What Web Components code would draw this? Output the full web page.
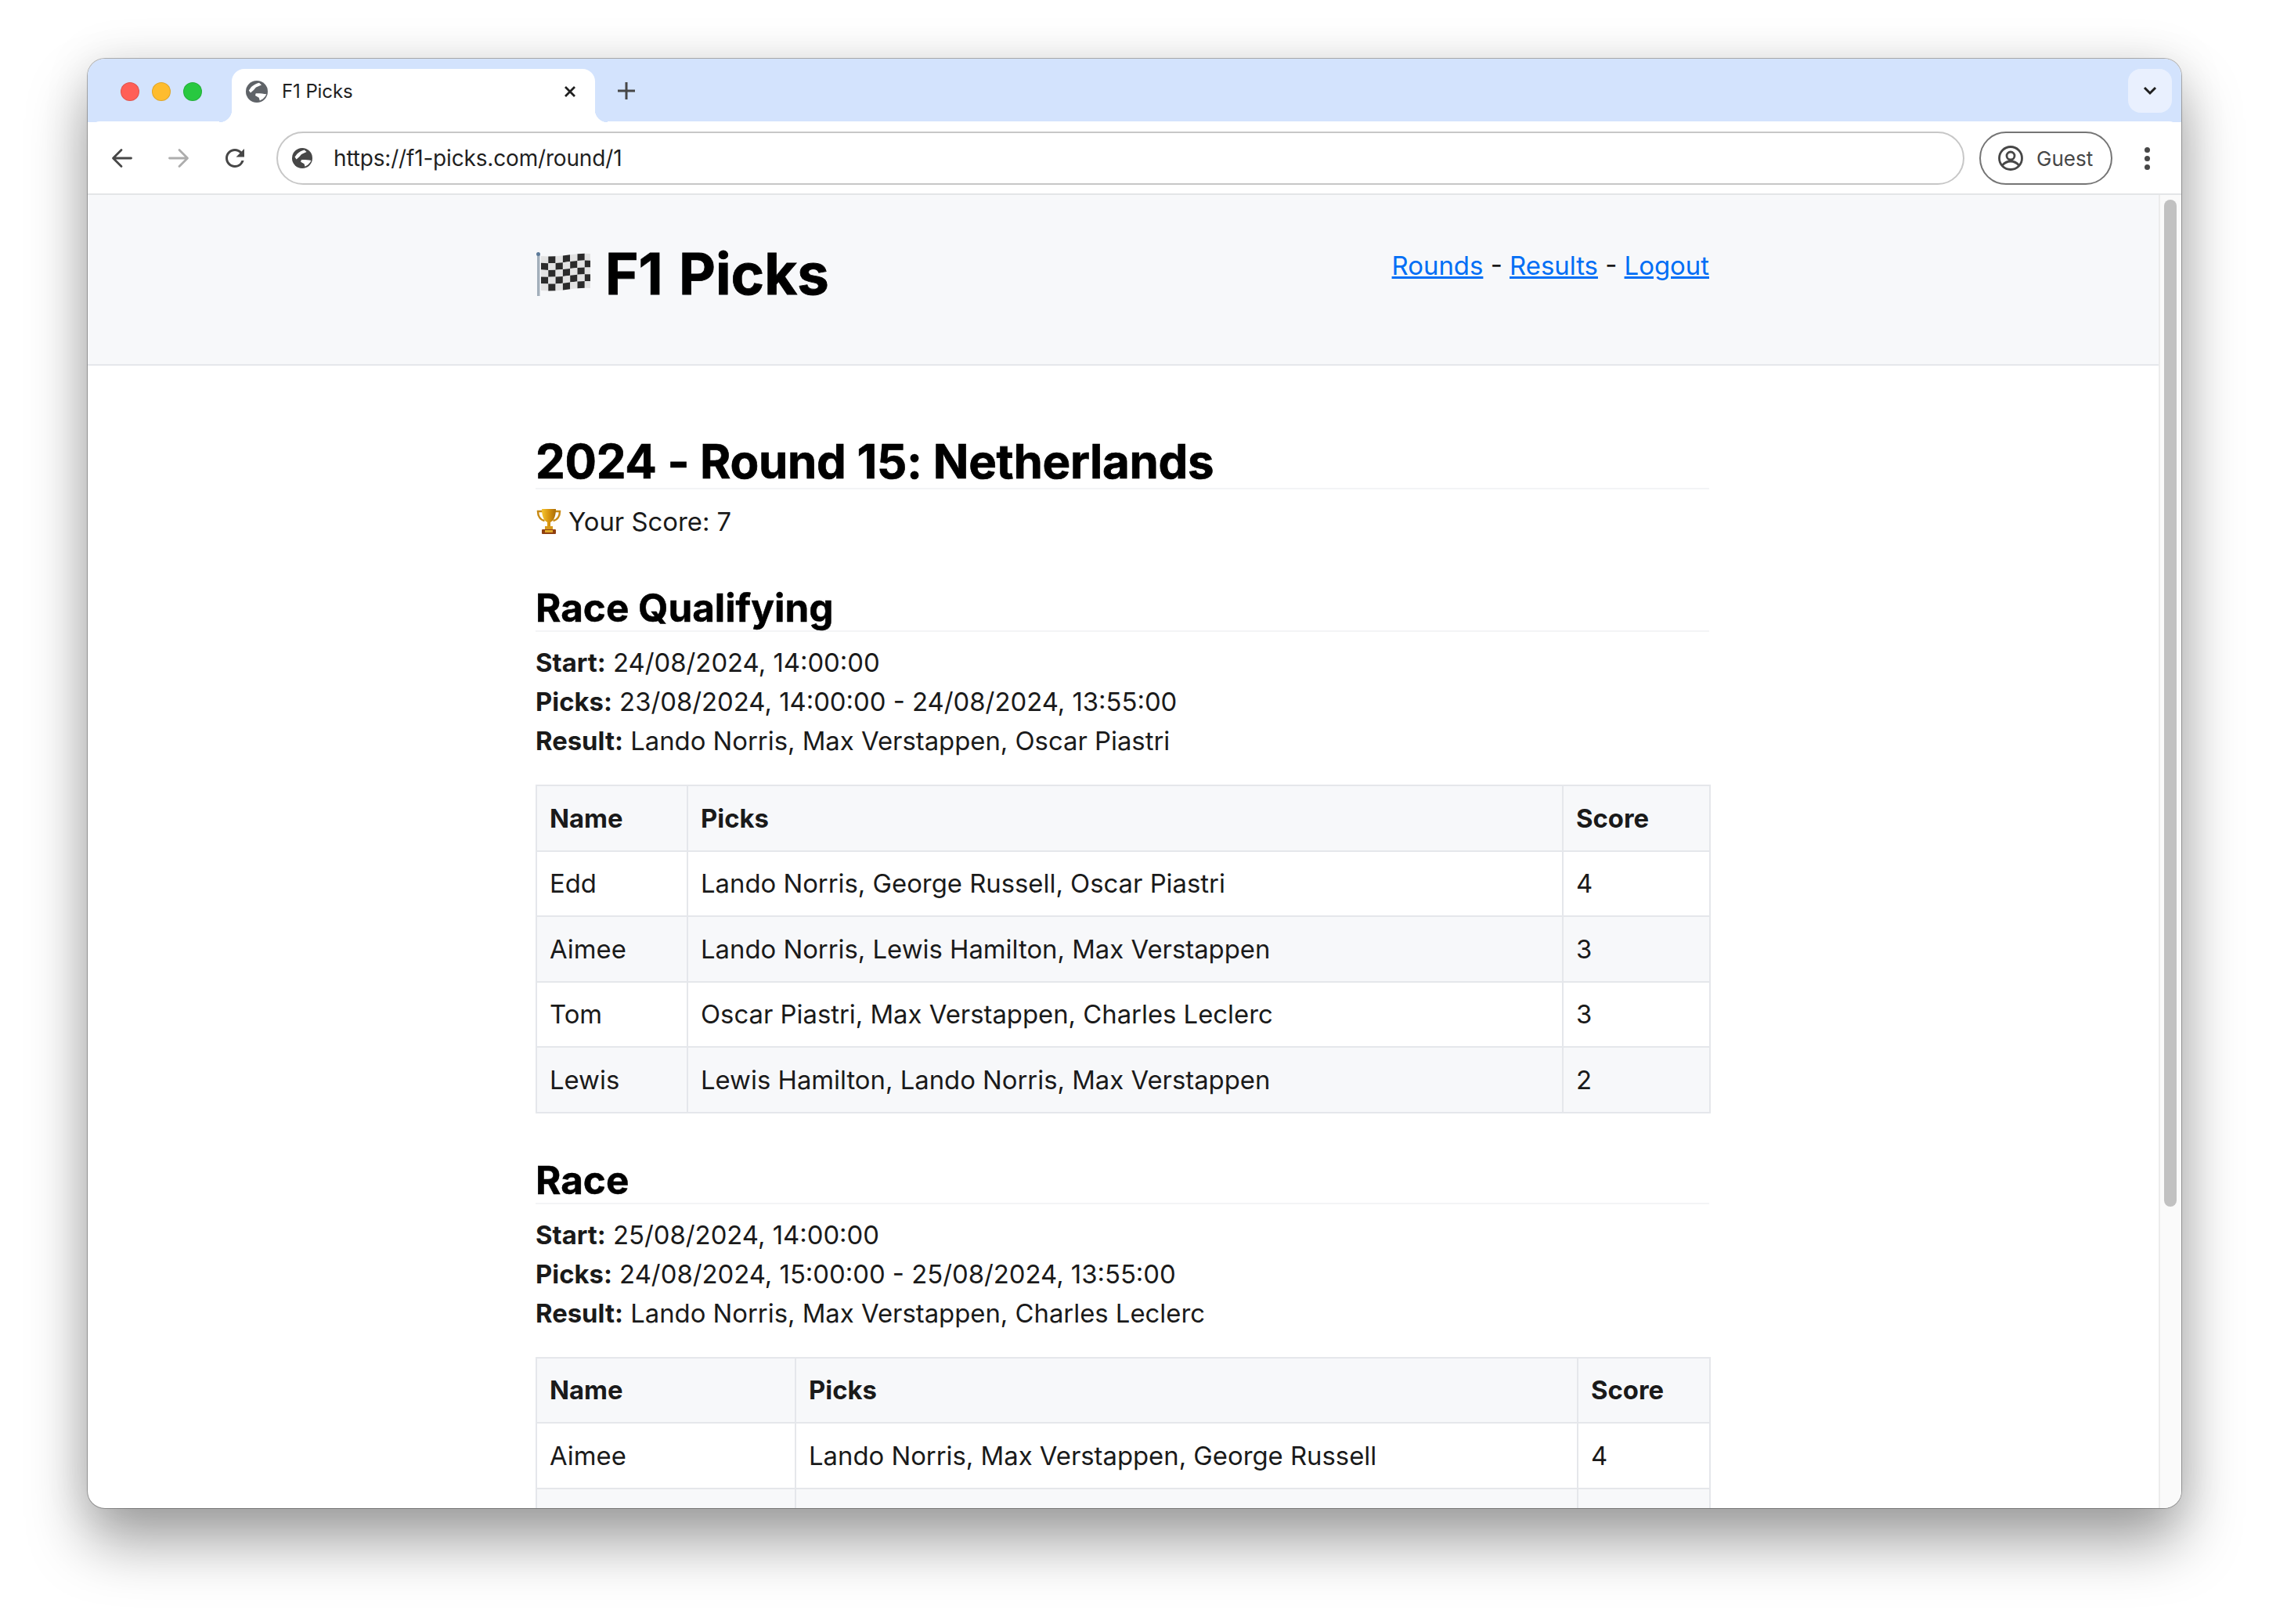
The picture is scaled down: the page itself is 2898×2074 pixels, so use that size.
<!DOCTYPE html>
<html>
<head>
<title>F1 Picks</title>
<style>
    html, body { margin: 0; padding: 0; background: #fff; }
    body { width: 2898px; height: 2074px; overflow: hidden; font-family: Inter, "Liberation Sans", sans-serif; }
</style>
</head>
<body>
<browser-window>
    <site-header></site-header>
    <site-main>
        <round-title score="7">2024 - Round 15: Netherlands</round-title>
        <round-section name="Race Qualifying" start="24/08/2024, 14:00:00" picks="23/08/2024, 14:00:00 - 24/08/2024, 13:55:00" result="Lando Norris, Max Verstappen, Oscar Piastri">
            <picks-table cols="193,1118,188" rows="Edd|Lando Norris, George Russell, Oscar Piastri|4;Aimee|Lando Norris, Lewis Hamilton, Max Verstappen|3;Tom|Oscar Piastri, Max Verstappen, Charles Leclerc|3;Lewis|Lewis Hamilton, Lando Norris, Max Verstappen|2"></picks-table>
        </round-section>
        <round-section name="Race" start="25/08/2024, 14:00:00" picks="24/08/2024, 15:00:00 - 25/08/2024, 13:55:00" result="Lando Norris, Max Verstappen, Charles Leclerc">
            <!-- the row below Aimee is only just showing above the window's edge -->
            <picks-table cols="331,999,169" rows="Aimee|Lando Norris, Max Verstappen, George Russell|4;||"></picks-table>
        </round-section>
    </site-main>
</browser-window>
<script>
    const GLOBE = (size, fill) => `<svg width="${size}" height="${size}" viewBox="0 0 28 28"><circle cx="14" cy="14" r="14" fill="${fill}"/><path d="M17 2.800C13.500 3.600 10 5.500 7 8L3.800 12.500 6 15.500 10 12 13 8.500 20 5.500zM26.300 17.300C22 16.600 17 16 12.700 16.300L12 19l4.700 2.700 1.100 3.800 4-2.300 3-3.200z" fill="#fff"/></svg>`;

    // checkered flag, cell by cell so the wave runs through all of them
    const FLAG = () => {
        const wave = (x) => 13 - x * 0.04 + 1 * Math.sin(x / 11);
        const cells = [];
        const W = 9.300, H = 8.800;
        for (let c = 0; c < 7; c++) {
            for (let r = 0; r < 5; r++) {
                const x1 = 7 + c * W, x2 = x1 + W;
                const y = (x, k) => (wave(x - 7) - 8 + k * H).toFixed(1);
                const dark = (c + r) % 2 === 1;
                cells.push(`<polygon points="${x1.toFixed(1)},${y(x1, r)} ${x2.toFixed(1)},${y(x2, r)} ${x2.toFixed(1)},${y(x2, r + 1)} ${x1.toFixed(1)},${y(x1, r + 1)}" fill="${dark ? "#2b2b2b" : "#e2e2e2"}"/>`);
            }
        }
        return `<svg width="70" height="56" viewBox="0 0 70 56"><rect x="2" y="2" width="3.500" height="54" fill="#a3afbb"/><circle cx="3.500" cy="2.500" r="2.500" fill="#5c7a99"/>${cells.join("")}</svg>`;
    };

    customElements.define("browser-tab", class BrowserTab extends HTMLElement {
        constructor() {
            super();
            this.attachShadow({ mode: "open" }).innerHTML = `
                <style>
                    :host { display: flex; align-items: center; width: 464px; height: 68px; background: #fff; border-radius: 16px 16px 0 0; position: relative; box-sizing: border-box; padding: 0 0 11px 18px; font: 400 24px Inter, sans-serif; color: #1f1f1f; }
                    /* little concave corners at the foot of the tab */
                    :host::before, :host::after { content: ""; position: absolute; bottom: 0; width: 16px; height: 16px; background: radial-gradient(circle at 0 0, #d3e3fd 16px, #fff 16.5px); }
                    :host::before { left: -16px; }
                    :host::after { right: -16px; background: radial-gradient(circle at 100% 0, #d3e3fd 16px, #fff 16.5px); }
                    .title { margin-left: 18px; flex: 1; letter-spacing: -.1px; }
                    svg.x { margin-right: 23px; }
                </style>
                ${GLOBE(28, "#5f6368")}
                <span class="title">F1 Picks</span>
                <svg class="x" width="18" height="18" viewBox="0 0 18 18"><path d="M3 3l12 12M15 3L3 15" stroke="#1f1f1f" stroke-width="2.800"/></svg>`;
        }
    });

    customElements.define("tab-strip", class TabStrip extends HTMLElement {
        constructor() {
            super();
            this.attachShadow({ mode: "open" }).innerHTML = `
                <style>
                    :host { display: flex; align-items: flex-end; height: 81px; background: #d3e3fd; box-sizing: border-box; }
                    .lights { display: flex; gap: 16px; width: 184px; box-sizing: border-box; padding-left: 42px; align-self: flex-start; margin-top: 30px; }
                    .lights i { width: 24px; height: 24px; border-radius: 50%; box-sizing: border-box; border: 1px solid rgba(0,0,0,.12); }
                    .plus { align-self: flex-start; margin: 30px 0 0 29px; }
                    .more { margin-left: auto; margin-right: 12px; align-self: flex-start; margin-top: 13px; width: 56px; height: 56px; border-radius: 16px; background: #e9f0fe; display: flex; align-items: center; justify-content: center; }
                </style>
                <div class="lights"><i style="background:#ff5f57"></i><i style="background:#febc2e"></i><i style="background:#28c840"></i></div>
                <browser-tab></browser-tab>
                <svg class="plus" width="22" height="22" viewBox="0 0 22 22"><path d="M11 0v22M0 11h22" stroke="#474747" stroke-width="3"/></svg>
                <div class="more"><svg width="18" height="12" viewBox="0 0 18 12"><path d="M2 2l7 7 7-7" fill="none" stroke="#1f1f1f" stroke-width="3"/></svg></div>`;
        }
    });

    customElements.define("browser-toolbar", class BrowserToolbar extends HTMLElement {
        constructor() {
            super();
            this.attachShadow({ mode: "open" }).innerHTML = `
                <style>
                    :host { display: flex; align-items: center; height: 94px; background: #fff; border-radius: 16px 16px 0 0; margin-top: -1px; box-sizing: border-box; border-bottom: 2px solid #e3e5e7; padding: 2px 0 0 0; }
                    .nav { display: flex; align-items: center; gap: 36px; padding-left: 26px; width: 241px; box-sizing: border-box; }
                    .omni { flex: 0 0 2156px; height: 68px; box-sizing: border-box; border: 2px solid #c7c7c7; border-radius: 34px; display: flex; align-items: center; padding-left: 18px; font: 400 28px Inter, sans-serif; color: #1f1f1f; }
                    .omni span { margin-left: 27px; letter-spacing: -.17px; }
                    .guest { margin-left: 19px; width: 170px; height: 68px; box-sizing: border-box; border: 2px solid #757575; border-radius: 34px; display: flex; align-items: center; padding-left: 22px; gap: 17px; font: 400 26px Inter, sans-serif; color: #474747; }
                    .dots { margin-left: 41px; display: flex; flex-direction: column; gap: 4px; }
                    .dots i { width: 7px; height: 7px; background: #474747; border-radius: 50%; }
                </style>
                <div class="nav">
                    <svg width="36" height="36" viewBox="0 0 36 36"><path d="M29.500 18H7M17 7.500L6.500 18 17 28.500" fill="none" stroke="#474747" stroke-width="2.800" stroke-linecap="round" stroke-linejoin="round"/></svg>
                    <svg width="36" height="36" viewBox="0 0 36 36"><path d="M6.500 18H29M19 7.500L29.500 18 19 28.500" fill="none" stroke="#adadad" stroke-width="2.800" stroke-linecap="round" stroke-linejoin="round"/></svg>
                    <svg width="36" height="36" viewBox="0 0 24 24"><path fill="#474747" d="M17.650 6.350A7.958 7.958 0 0 0 12 4c-4.420 0-7.990 3.580-7.990 8s3.570 8 7.990 8c3.730 0 6.840-2.550 7.730-6h-2.080A5.990 5.990 0 0 1 12 18c-3.310 0-6-2.690-6-6s2.690-6 6-6c1.660 0 3.140.69 4.220 1.780L13 11h7V4l-2.350 2.350z"/></svg>
                </div>
                <div class="omni">${GLOBE(26, "#474747")}<span>https://f1-picks.com/round/1</span></div>
                <div class="guest">
                    <svg width="32" height="32" viewBox="0 0 32 32"><circle cx="16" cy="16" r="14.500" fill="none" stroke="#474747" stroke-width="2.800"/><circle cx="16" cy="13" r="5" fill="none" stroke="#474747" stroke-width="2.800"/><path d="M5.500 25c3-3.400 6.600-5 10.500-5s7.500 1.600 10.500 5" fill="none" stroke="#474747" stroke-width="2.800"/></svg>
                    <span>Guest</span>
                </div>
                <div class="dots"><i></i><i></i><i></i></div>`;
        }
    });

    customElements.define("browser-window", class BrowserWindow extends HTMLElement {
        constructor() {
            super();
            this.attachShadow({ mode: "open" }).innerHTML = `
                <style>
                    :host { display: flex; flex-direction: column; width: 2674px; height: 1851px; margin: 75px 0 0 112px; background: #fff; border-radius: 22px; overflow: hidden; box-shadow: 0 0 0 1px rgba(0,0,0,.28), 0 44px 76px rgba(0,0,0,.36), 0 0 60px rgba(0,0,0,.1); }
                    .body { flex: 1; display: flex; min-height: 0; }
                    .view { flex: 1; min-width: 0; overflow: hidden; }
                    .track { flex: 0 0 29px; box-sizing: border-box; background: #fafafa; border-left: 2px solid #ececec; padding: 6px 6px 0 5px; }
                    .thumb { height: 1286px; border-radius: 8px; background: #c1c1c1; }
                </style>
                <tab-strip></tab-strip>
                <browser-toolbar></browser-toolbar>
                <div class="body">
                    <div class="view"><slot></slot></div>
                    <div class="track"><div class="thumb"></div></div>
                </div>`;
        }
    });

    customElements.define("site-header", class SiteHeader extends HTMLElement {
        constructor() {
            super();
            this.attachShadow({ mode: "open" }).innerHTML = `
                <style>
                    :host { display: block; background: #f7f8fa; border-bottom: 2px solid #e5e7eb; height: 218px; box-sizing: border-box; }
                    .wrap { width: 1499px; margin-left: 572px; display: flex; justify-content: space-between; align-items: flex-start; padding-top: 65px; box-sizing: border-box; }
                    h1 { margin: 0; font: 700 72.500px/1 Inter, sans-serif; color: #000; display: flex; align-items: center; gap: 19px; word-spacing: 3px; -webkit-text-stroke: .8px #000; }
                    nav { font: 400 32.900px/1.5 Inter, sans-serif; color: #1a1a1a; padding-top: 1px; }
                    a { color: #006ef5; text-decoration: underline; }
                </style>
                <div class="wrap">
                    <h1>${FLAG()}<span>F1 Picks</span></h1>
                    <nav><a>Rounds</a> - <a>Results</a> - <a>Logout</a></nav>
                </div>`;
        }
    });

    customElements.define("site-main", class SiteMain extends HTMLElement {
        constructor() {
            super();
            this.attachShadow({ mode: "open" }).innerHTML = `
                <style>
                    :host { display: block; width: 1499px; margin-left: 572px; padding-top: 84px; }
                </style>
                <slot></slot>`;
        }
    });

    customElements.define("round-title", class RoundTitle extends HTMLElement {
        constructor() {
            super();
            this.attachShadow({ mode: "open" }).innerHTML = `
                <style>
                    :host { display: block; color: #1a1a1a; }
                    h2 { margin: 0; font: 700 60px/76px Inter, sans-serif; color: #000; border-bottom: 2px solid #f3f4f6; height: 72px; letter-spacing: -.3px; -webkit-text-stroke: .7px #000; }
                    p { margin: 0 0 34px; font: 400 32.850px/50px Inter, sans-serif; display: flex; align-items: center; gap: 9px; height: 81px; }
                    svg { margin-left: 1px; }
                </style>
                <h2><slot></slot></h2>
                <p>
                    <svg width="32" height="33" viewBox="0 0 32 33">
                        <defs><linearGradient id="gold" x1="0" x2="1" y1="0" y2="0"><stop offset="0" stop-color="#f4c430"/><stop offset=".5" stop-color="#d8950f"/><stop offset="1" stop-color="#a96d08"/></linearGradient></defs>
                        <path d="M8 4H2c0 6 3 11 8.500 12M24 4h6c0 6-3 11-8.500 12" fill="none" stroke="#c88a14" stroke-width="2.500"/>
                        <path d="M7 1h18c0 10-3 15-7 17v6h-4v-6C10 16 7 11 7 1z" fill="url(#gold)"/>
                        <rect x="11" y="23" width="10" height="4" fill="#d89a1c"/>
                        <rect x="7" y="27" width="18" height="6" rx="1" fill="#8f3f10"/><rect x="11" y="28" width="10" height="3" fill="#e0a92a"/>
                    </svg>
                    <span>Your Score: ${this.getAttribute("score")}</span>
                </p>`;
        }
    });

    customElements.define("round-section", class RoundSection extends HTMLElement {
        constructor() {
            super();
            const a = (n) => this.getAttribute(n);
            this.attachShadow({ mode: "open" }).innerHTML = `
                <style>
                    :host { display: block; color: #1a1a1a; margin-bottom: 49px; }
                    h3 { margin: 0; font: 700 49.400px/73px Inter, sans-serif; color: #000; border-bottom: 2px solid #f3f4f6; height: 65px; -webkit-text-stroke: .5px #000; }
                    .meta { font: 400 32.850px/50px Inter, sans-serif; padding: 14px 0 31px; }
                    b { font-weight: 700; }
                </style>
                <h3>${a("name")}</h3>
                <div class="meta">
                    <div><b>Start:</b> ${a("start")}</div>
                    <div><b>Picks:</b> ${a("picks")}</div>
                    <div><b>Result:</b> ${a("result")}</div>
                </div>
                <slot></slot>`;
        }
    });

    customElements.define("picks-table", class PicksTable extends HTMLElement {
        constructor() {
            super();
            const cols = this.getAttribute("cols").split(",");
            const rows = this.getAttribute("rows").split(";").map(r => r.split("|"));
            this.attachShadow({ mode: "open" }).innerHTML = `
                <style>
                    :host { display: block; }
                    table { border-collapse: collapse; width: 100%; table-layout: fixed; font: 400 32.850px/50px Inter, sans-serif; color: #1a1a1a; }
                    th, td { border: 2px solid #e5e7eb; padding: 0 16px; text-align: left; height: 83.500px; box-sizing: border-box; }
                    thead tr, tbody tr:nth-child(even) { background: #f7f8fa; }
                </style>
                <table>
                    <colgroup>${cols.map(c => `<col style="width:${c}px">`).join("")}</colgroup>
                    <thead><tr><th>Name</th><th>Picks</th><th>Score</th></tr></thead>
                    <tbody>${rows.map(r => `<tr>${r.map(c => `<td>${c}</td>`).join("")}</tr>`).join("")}</tbody>
                </table>`;
        }
    });
</script>
</body>
</html>
